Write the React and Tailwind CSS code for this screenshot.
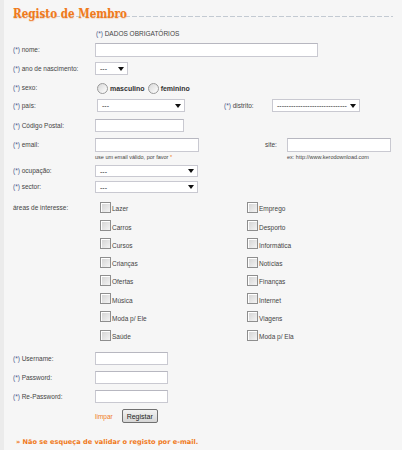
import React from 'react';

const req = <span className="text-[#4a5a8c]">(*)</span>;

function Label({ children, required = true }) {
    return (
        <div className="w-[82px] shrink-0 text-[6.5px] text-[#444]">
            {required && <>{req} </>}{children}
        </div>
    );
}

function TextInput({ w, h = 'h-[14px]' }) {
    return <div className={`${w} ${h} bg-white border border-[#c9c9d1] border-t-[#b7b7c0]`} />;
}

function Select({ w, value = '---', h = 'h-[13px]' }) {
    return (
        <div className={`${w} ${h} bg-white border border-[#c9c9d1] flex items-center justify-between pl-[4px] pr-[3px] text-[7px] text-[#222] overflow-hidden`}>
            <span className="leading-none whitespace-nowrap">{value}</span>
            <svg className="shrink-0 ml-[2px]" width="6" height="4" viewBox="0 0 6 4"><path d="M0 0H6L3 4Z" fill="#111" /></svg>
        </div>
    );
}

function Radio() {
    return <div className="w-[11px] h-[11px] rounded-full border border-[#9a9a9a] bg-gradient-to-br from-[#d8d8d8] to-[#ffffff]" />;
}

function Check({ label }) {
    return (
        <div className="h-[18.3px] flex items-center gap-[1px]">
            <div className="w-[11px] h-[11px] border border-[#8e8e8e] bg-gradient-to-br from-[#d2d2d2] to-[#f4f4f4] shadow-[inset_1px_1px_0_#fff]" />
            <span className="text-[6.5px] text-[#444] mt-[4px]">{label}</span>
        </div>
    );
}

const left = ['Lazer', 'Carros', 'Cursos', 'Crianças', 'Ofertas', 'Música', 'Moda p/ Ele', 'Saúde'];
const right = ['Emprego', 'Desporto', 'Informática', 'Notícias', 'Finanças', 'Internet', 'Viagens', 'Moda p/ Ela'];

export default function App() {
    return (
        <div className="w-[402px] h-[450px] bg-[#f6f6f6] flex overflow-hidden" style={{ fontFamily: '"Liberation Sans", Arial, sans-serif' }}>
            <div className="w-[4px] shrink-0 bg-[#ebebeb]" />
            <div className="flex-1 pl-[9px]">
                {/* title */}
                <div className="pt-[1px] h-[16px]">
                    <div className="inline-block origin-left scale-x-[0.8] text-[13px] leading-[15px] font-bold text-[#f07a1c] whitespace-nowrap [text-shadow:0_1px_1px_rgba(240,122,28,0.25)]" style={{ fontFamily: '"DejaVu Serif", serif' }}>
                        Registo de Membro
                    </div>
                </div>
                <div className="h-px w-[380px] bg-[repeating-linear-gradient(90deg,#c3cad2_0_5px,transparent_5px_7px)]" />

                <div className="mt-[13px] pl-[83px] text-[6.5px] text-[#444] leading-[8px]">{req} DADOS OBRIGATÓRIOS</div>

                {/* nome */}
                <div className="mt-[5px] flex items-center">
                    <Label>nome:</Label>
                    <TextInput w="w-[223px]" />
                </div>
                {/* ano */}
                <div className="mt-[5px] flex items-center">
                    <Label>ano de nascimento:</Label>
                    <Select w="w-[33px]" />
                </div>
                {/* sexo */}
                <div className="mt-[7px] h-[12px] flex items-center">
                    <Label>sexo:</Label>
                    <div className="flex items-center pl-[2px] text-[7px] font-bold text-[#333]">
                        <Radio />
                        <span className="ml-[2px] mt-[2px]">masculino</span>
                        <div className="ml-[3px]"><Radio /></div>
                        <span className="ml-[2px] mt-[2px]">feminino</span>
                    </div>
                </div>
                {/* pais / distrito */}
                <div className="mt-[5px] flex items-center">
                    <Label>país:</Label>
                    <div className="pl-[2px]"><Select w="w-[88px]" value="---" /></div>
                    <div className="ml-[39px] w-[48px] text-[6.5px] text-[#444]">{req} distrito:</div>
                    <Select w="w-[88px]" value="------------------------------" />
                </div>
                {/* codigo postal */}
                <div className="mt-[7px] flex items-center">
                    <Label>Código Postal:</Label>
                    <TextInput w="w-[89px]" h="h-[13px]" />
                </div>
                {/* email / site */}
                <div className="mt-[6px] flex items-start">
                    <Label><span className="leading-[14px]">email:</span></Label>
                    <div className="w-[104px]">
                        <TextInput w="w-[104px]" />
                        <div className="mt-[1px] text-[5.5px] text-[#444] leading-[8px]">use um email válido, por favor <span className="text-[#f07a1c]">*</span></div>
                    </div>
                    <div className="ml-[66px] w-[22px] text-[6.5px] text-[#444] leading-[14px]">site:</div>
                    <div>
                        <TextInput w="w-[104px]" />
                        <div className="mt-[1px] text-[5.5px] text-[#444] leading-[8px]">ex: http://www.kerodownload.com</div>
                    </div>
                </div>
                {/* ocupacao */}
                <div className="mt-[4px] flex items-center">
                    <Label>ocupação:</Label>
                    <Select w="w-[103px]" h="h-[12px]" />
                </div>
                {/* sector */}
                <div className="mt-[4px] flex items-center">
                    <Label>sector:</Label>
                    <Select w="w-[103px]" h="h-[12px]" />
                </div>
                {/* areas */}
                <div className="mt-[5px] flex">
                    <div className="w-[87px] shrink-0 text-[6.5px] text-[#444] leading-[8px] pt-[6px]">áreas de interesse:</div>
                    <div className="w-[147px]">
                        {left.map(l => <Check key={l} label={l} />)}
                    </div>
                    <div>
                        {right.map(l => <Check key={l} label={l} />)}
                    </div>
                </div>
                {/* credenciais */}
                <div className="mt-[8px] flex items-center">
                    <Label>Username:</Label>
                    <TextInput w="w-[73px]" h="h-[13px]" />
                </div>
                <div className="mt-[6px] flex items-center">
                    <Label>Password:</Label>
                    <TextInput w="w-[73px]" h="h-[13px]" />
                </div>
                <div className="mt-[6px] flex items-center">
                    <Label>Re-Password:</Label>
                    <TextInput w="w-[73px]" h="h-[13px]" />
                </div>
                <div className="mt-[6px] pl-[82px] flex items-center gap-[9px]">
                    <span className="text-[6.5px] text-[#f07a1c]">limpar</span>
                    <button className="w-[36px] h-[14px] rounded-[2px] border border-[#707070] bg-gradient-to-b from-[#f2f2f2] to-[#d6d6d6] text-[7px] text-[#222] leading-none">Registar</button>
                </div>
                <div className="mt-[15px] pl-[3px] text-[6.6px] font-bold text-[#f07a1c]" style={{ fontFamily: '"DejaVu Sans", Verdana, sans-serif' }}>
                    » Não se esqueça de validar o registo por e-mail.
                </div>
            </div>
        </div>
    );
}
